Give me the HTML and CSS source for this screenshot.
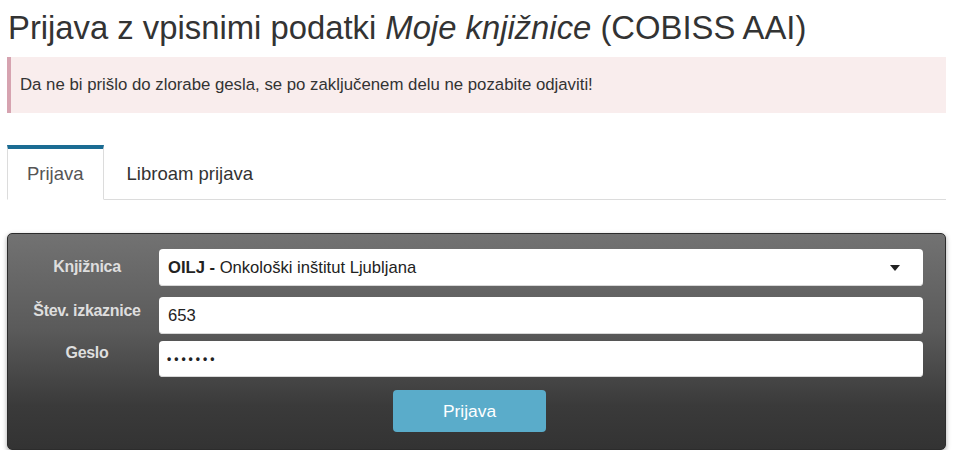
FILE: index.html
```html
<!DOCTYPE html>
<html lang="sl">
<head>
<meta charset="utf-8">
<title>Prijava</title>
<link rel="stylesheet" href="styles.css">
</head>
<body>
<div class="page">
  <h1 class="title">Prijava z vpisnimi podatki <em>Moje knjižnice</em> (COBISS AAI)</h1>
  <div class="alert">Da ne bi prišlo do zlorabe gesla, se po zaključenem delu ne pozabite odjaviti!</div>
  <ul class="tabs">
    <li class="tab tab-active">Prijava</li>
    <li class="tab">Libroam prijava</li>
  </ul>
  <div class="panel">
    <div class="row">
      <div class="label label-1">Knjižnica</div>
      <div class="field field-select"><span><b>OILJ -</b> Onkološki inštitut Ljubljana</span><span class="caret"></span></div>
    </div>
    <div class="row row-2">
      <div class="label label-2">Štev. izkaznice</div>
      <div class="field">653</div>
    </div>
    <div class="row row-3">
      <div class="label label-3">Geslo</div>
      <div class="field field-pass">•••••••</div>
    </div>
    <div class="actions">
      <div class="btn">Prijava</div>
    </div>
  </div>
</div>
</body>
</html>
```

FILE: styles.css
```css
* { box-sizing: border-box; }
html, body { margin: 0; padding: 0; background: #fff; }
body {
  font-family: "Liberation Sans", Arial, sans-serif;
  color: #333;
}
.page {
  padding: 7px 10px 0 7px;
}
.title {
  margin: 2px 0 0 1px;
  font-size: 32.8px;
  line-height: 38px;
  font-weight: normal;
  color: #333;
}
.title em { font-style: italic; }
.alert {
  margin-top: 10px;
  height: 56px;
  padding: 18px 9px;
  line-height: 20px;
  font-size: 16.8px;
  background: #f9eded;
  border-left: 4px solid #d6a3b0;
  color: #333;
}
.tabs {
  list-style: none;
  margin: 32px 0 0 0;
  padding: 0;
  display: flex;
  border-bottom: 1px solid #dcdcdc;
}
.tab {
  height: 55px;
  padding: 4px 20px 0 22px;
  display: flex;
  align-items: center;
  font-size: 18.5px;
  color: #333;
  border: 1px solid transparent;
  border-top: 0;
  margin-bottom: -1px;
}
.tab-active {
  background: #fff;
  color: #555;
  border-color: #dcdcdc;
  border-bottom-color: #fff;
  border-top: 4px solid #1b6c93;
  padding: 0 19px;
}
.panel {
  margin-top: 33px;
  height: 217px;
  border: 1px solid #2c2c2c;
  border-radius: 5px;
  background: linear-gradient(to bottom, #727272 0%, #5a5a5a 45%, #3a3a3a 80%, #333 100%);
  box-shadow: 0 2px 5px rgba(0, 0, 0, 0.35);
  padding: 15px 22px 0 16px;
}
.row {
  display: flex;
  align-items: flex-start;
}
.row-2 { margin-top: 11px; }
.row-3 { margin-top: 7px; }
.label {
  width: 126px;
  margin-right: 9px;
  text-align: center;
  font-weight: bold;
  font-size: 16px;
  line-height: 20px;
  color: #dedede;
  letter-spacing: -0.3px;
}
.label-1 { padding-top: 8px; }
.label-2 { padding-top: 4px; }
.label-3 { padding-top: 2px; }
.field {
  flex: 1;
  height: 37px;
  background: #fff;
  border-radius: 4px;
  box-shadow: inset 0 -1px 0 #d8d8d8;
  padding: 0 9px;
  display: flex;
  align-items: center;
  font-size: 16.6px;
  color: #222;
}
.row-3 .field { height: 36px; }
.field-select b { font-weight: bold; color: #222; }
.field-select { padding-right: 23px; }
.caret {
  margin-left: auto;
  width: 0;
  height: 0;
  border-left: 5px solid transparent;
  border-right: 5px solid transparent;
  border-top: 6px solid #222;
}
.field-pass {
  font-size: 12px;
  letter-spacing: 3px;
  padding-left: 8px;
  font-weight: bold;
}
.actions {
  display: flex;
  justify-content: center;
  margin-top: 13px;
  padding-right: 8px;
}
.btn {
  width: 153px;
  height: 42px;
  border-radius: 4px;
  background: #5aacca;
  color: #fff;
  font-size: 17.4px;
  display: flex;
  align-items: center;
  justify-content: center;
}
```
